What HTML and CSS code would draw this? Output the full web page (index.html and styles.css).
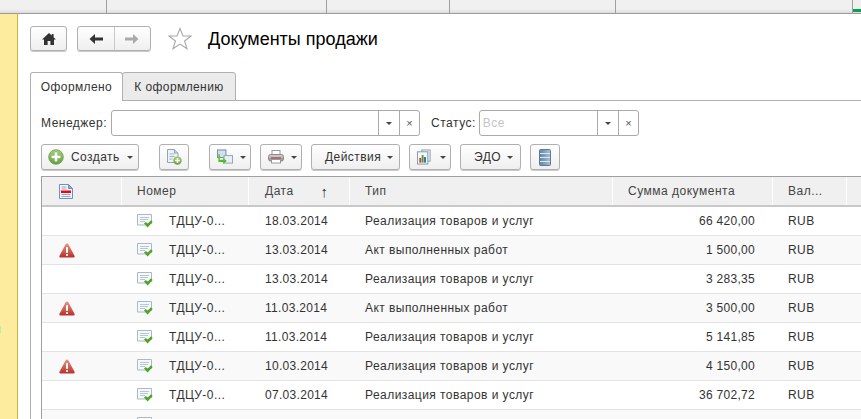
FILE: index.html
```html
<!DOCTYPE html>
<html lang="ru">
<head>
<meta charset="utf-8">
<title>Документы продажи</title>
<link rel="stylesheet" href="styles.css">
</head>
<body>
<svg class="defs" aria-hidden="true">
  <defs>
    <linearGradient id="gGreen" x1="0" y1="0" x2="0" y2="1"><stop offset="0" stop-color="#a6cf7e"/><stop offset="1" stop-color="#5f9e3c"/></linearGradient>
    <linearGradient id="gRed" x1="0" y1="0" x2="0" y2="1"><stop offset="0" stop-color="#ea9384"/><stop offset="1" stop-color="#b5322a"/></linearGradient>
    <linearGradient id="gSteel" x1="0" y1="0" x2="1" y2="0"><stop offset="0" stop-color="#5f85a8"/><stop offset="1" stop-color="#a9c0d4"/></linearGradient>
    <linearGradient id="gGrey" x1="0" y1="0" x2="0" y2="1"><stop offset="0" stop-color="#d8d8d8"/><stop offset="1" stop-color="#8c8c8c"/></linearGradient>
    <symbol id="i-home" viewBox="0 0 16 14"><path d="M8 1 1 7.500h2V13h3.600V9h2.800v4H13V7.500h2L12.600 5.200V2h-1.800v1.500z" fill="#333"/></symbol>
    <symbol id="i-left" viewBox="0 0 16 12"><path d="M7 1 1.500 6 7 11V7.600h8V4.400H7z" fill="#333"/></symbol>
    <symbol id="i-right" viewBox="0 0 16 12"><path d="M9 1 14.500 6 9 11V7.600H1V4.400h8z" fill="#aaa"/></symbol>
    <symbol id="i-star" viewBox="0 0 24 23"><path d="M12 1.500 15 9h8l-6.400 5 2.400 7.800-7-4.700-7 4.700L7.400 14 1 9h8z" fill="#fff" stroke="#a8a8a8" stroke-width="1.100"/></symbol>
    <symbol id="i-plus" viewBox="0 0 16 16"><circle cx="8" cy="8" r="7.300" fill="url(#gGreen)" stroke="#6d9a52" stroke-width=".8"/><path d="M6.700 3.500h2.600v3.200h3.200v2.600H9.300v3.200H6.700V9.300H3.500V6.700h3.200z" fill="#fff"/></symbol>
    <symbol id="i-docadd" viewBox="0 0 16 16"><path d="M1.500.5h7l3.500 3.500v9.500H1.500z" fill="#eef2f6" stroke="#8ea4b8"/><path d="M8.500.5V4H12" fill="#c9d6e2" stroke="#8ea4b8"/><path d="M3.500 5h5M3.500 7.500h5M3.500 10h3" stroke="#9fb0c0"/><circle cx="11.500" cy="11.500" r="4.200" fill="url(#gGreen)"/><path d="M10.700 9h1.600v1.700H14v1.600h-1.700V14h-1.600v-1.700H9v-1.600h1.700z" fill="#fff"/></symbol>
    <symbol id="i-move" viewBox="0 0 17 16"><rect x=".5" y=".5" width="9" height="8" fill="#d3dfea" stroke="#6f8ba6"/><rect x="7.500" y="6.500" width="9" height="8" fill="#e9eff5" stroke="#8ea4b8"/><path d="M3 5v6h3.500V9l4 3.200-4 3.200v-2.100H1.500V5z" fill="#4fbf28"/></symbol>
    <symbol id="i-print" viewBox="0 0 16 14"><rect x="4" y=".5" width="8" height="5" fill="#fff" stroke="#9a9a9a"/><rect x=".5" y="4.500" width="15" height="6.500" rx="2" fill="url(#gGrey)" stroke="#8a8a8a"/><rect x="3" y="7.500" width="10" height="1" fill="#a33"/><rect x="3.500" y="9.500" width="9" height="3.500" fill="#fff" stroke="#9a9a9a"/></symbol>
    <symbol id="i-report" viewBox="0 0 17 16"><rect x="5" y=".5" width="9" height="12" fill="#e4ebf2" stroke="#8ea4b8"/><rect x=".5" y="2.500" width="11" height="13" fill="#f6f8fa" stroke="#7f98ae"/><rect x="2.500" y="9" width="2" height="5" fill="#d8352a"/><rect x="5" y="6" width="2" height="8" fill="#4f9e28"/><rect x="7.500" y="8" width="2" height="6" fill="#2d6fb5"/></symbol>
    <symbol id="i-list" viewBox="0 0 12 17"><rect x=".5" y=".5" width="11" height="16" rx="1" fill="url(#gSteel)" stroke="#5b7c99"/><path d="M1 4.500h10M1 8.500h10M1 12.500h10" stroke="#dfe8f0" stroke-width="1.200"/></symbol>
    <symbol id="i-docred" viewBox="0 0 15 15"><path d="M.5.500h9l4 4v10H.5z" fill="#f4f6fb" stroke="#6f8fc4"/><path d="M9.500.5v4h4z" fill="#8fa9d4" stroke="#6f8fc4"/><path d="M2.500 3h5M2.500 5h5M2.500 10.500h9M2.500 12.500h9" stroke="#8fa9d4"/><rect x="2" y="6.500" width="10" height="2.500" fill="#f00"/></symbol>
    <symbol id="i-doccheck" viewBox="0 0 16 14"><path d="M.5.500h14v9h-4l-1 1.500H.5z" fill="#f6f8fa" stroke="#a9b9c6"/><path d="M3 3.500h9M3 5.500h8M3 7.500h5" stroke="#b9c6d1"/><path d="M7 9.500 8.900 8l1.700 1.800L14 6.200 15.700 8l-5.100 5.500z" fill="#4fa326"/></symbol>
    <symbol id="i-warn" viewBox="0 0 16 15"><path d="M8 .5c.7 0 1.100.4 1.500 1.100l6 11.200c.5 1 0 1.700-1 1.700h-13c-1 0-1.500-.7-1-1.700l6-11.200C6.900.9 7.300.5 8 .5z" fill="url(#gRed)"/><rect x="7" y="4" width="2" height="6" rx=".8" fill="#fff"/><rect x="7" y="11" width="2" height="2" rx=".8" fill="#fff"/></symbol>
  </defs>
</svg>

<header class="topbar">
  <div class="topcell topcell-a"></div>
  <div class="topcell topcell-b"></div>
  <div class="topcell topcell-c"></div>
  <div class="topcell topcell-d"></div>
  <div class="topcell topcell-e"></div>
  <div class="topcell topcell-f"><span class="topmark"></span></div>
</header>

<div class="shell">
  <aside class="sidebar"></aside>
  <main class="content">
    <div class="navrow">
      <div class="btn navbtn home"><svg class="ic-home"><use href="#i-home"/></svg></div>
      <div class="btn navbtn history">
        <span class="histpart"><svg class="ic-arrow"><use href="#i-left"/></svg></span>
        <span class="histpart histsep"><svg class="ic-arrow"><use href="#i-right"/></svg></span>
      </div>
      <svg class="ic-star"><use href="#i-star"/></svg>
      <h1 class="title">Документы продажи</h1>
    </div>

    <div class="tabs">
      <div class="tab tab-active">Оформлено</div>
      <div class="tab tab-idle">К оформлению</div>
      <div class="tabline"></div>
    </div>

    <div class="panel">
      <div class="filters">
        <label class="flabel">Менеджер:</label>
        <div class="field field-manager">
          <span class="fvalue"></span>
          <span class="fbtn"><i class="caret"></i></span>
          <span class="fbtn fx">×</span>
        </div>
        <label class="flabel flabel-status">Статус:</label>
        <div class="field field-status">
          <span class="fvalue fplaceholder">Все</span>
          <span class="fbtn"><i class="caret"></i></span>
          <span class="fbtn fx">×</span>
        </div>
      </div>

      <div class="toolbar">
        <div class="btn tb tb-create"><svg class="ic16"><use href="#i-plus"/></svg><span class="tbtext">Создать</span><i class="caret"></i></div>
        <div class="btn tb tb-icon tb-docadd"><svg class="ic16"><use href="#i-docadd"/></svg></div>
        <div class="btn tb tb-drop"><svg class="ic16"><use href="#i-move"/></svg><i class="caret"></i></div>
        <div class="btn tb tb-drop"><svg class="ic16"><use href="#i-print"/></svg><i class="caret"></i></div>
        <div class="btn tb tb-actions"><span class="tbtext">Действия</span><i class="caret"></i></div>
        <div class="btn tb tb-drop"><svg class="ic16"><use href="#i-report"/></svg><i class="caret"></i></div>
        <div class="btn tb tb-edo"><span class="tbtext">ЭДО</span><i class="caret"></i></div>
        <div class="btn tb tb-icon"><svg class="ic-list"><use href="#i-list"/></svg></div>
      </div>

      <div class="table">
        <div class="thead">
          <div class="th th-flag"><svg class="ic-flag"><use href="#i-docred"/></svg></div>
          <div class="th">Номер</div>
          <div class="th th-date">Дата<span class="sort">↑</span></div>
          <div class="th">Тип</div>
          <div class="th">Сумма документа</div>
          <div class="th">Вал...</div>
          <div class="th"></div>
        </div>

        <div class="tr">
          <div class="td td-flag"></div>
          <div class="td"><svg class="ic-doc"><use href="#i-doccheck"/></svg>ТДЦУ-0...</div>
          <div class="td td-date">18.03.2014</div>
          <div class="td">Реализация товаров и услуг</div>
          <div class="td td-sum">66 420,00</div>
          <div class="td">RUB</div>
          <div class="td"></div>
        </div>
        <div class="tr tr-alt">
          <div class="td td-flag"><svg class="ic-warn"><use href="#i-warn"/></svg></div>
          <div class="td"><svg class="ic-doc"><use href="#i-doccheck"/></svg>ТДЦУ-0...</div>
          <div class="td td-date">13.03.2014</div>
          <div class="td">Акт выполненных работ</div>
          <div class="td td-sum">1 500,00</div>
          <div class="td">RUB</div>
          <div class="td"></div>
        </div>
        <div class="tr">
          <div class="td td-flag"></div>
          <div class="td"><svg class="ic-doc"><use href="#i-doccheck"/></svg>ТДЦУ-0...</div>
          <div class="td td-date">13.03.2014</div>
          <div class="td">Реализация товаров и услуг</div>
          <div class="td td-sum">3 283,35</div>
          <div class="td">RUB</div>
          <div class="td"></div>
        </div>
        <div class="tr tr-alt">
          <div class="td td-flag"><svg class="ic-warn"><use href="#i-warn"/></svg></div>
          <div class="td"><svg class="ic-doc"><use href="#i-doccheck"/></svg>ТДЦУ-0...</div>
          <div class="td td-date">11.03.2014</div>
          <div class="td">Акт выполненных работ</div>
          <div class="td td-sum">3 500,00</div>
          <div class="td">RUB</div>
          <div class="td"></div>
        </div>
        <div class="tr">
          <div class="td td-flag"></div>
          <div class="td"><svg class="ic-doc"><use href="#i-doccheck"/></svg>ТДЦУ-0...</div>
          <div class="td td-date">11.03.2014</div>
          <div class="td">Реализация товаров и услуг</div>
          <div class="td td-sum">5 141,85</div>
          <div class="td">RUB</div>
          <div class="td"></div>
        </div>
        <div class="tr tr-alt">
          <div class="td td-flag"><svg class="ic-warn"><use href="#i-warn"/></svg></div>
          <div class="td"><svg class="ic-doc"><use href="#i-doccheck"/></svg>ТДЦУ-0...</div>
          <div class="td td-date">10.03.2014</div>
          <div class="td">Реализация товаров и услуг</div>
          <div class="td td-sum">4 150,00</div>
          <div class="td">RUB</div>
          <div class="td"></div>
        </div>
        <div class="tr">
          <div class="td td-flag"></div>
          <div class="td"><svg class="ic-doc"><use href="#i-doccheck"/></svg>ТДЦУ-0...</div>
          <div class="td td-date">07.03.2014</div>
          <div class="td">Реализация товаров и услуг</div>
          <div class="td td-sum">36 702,72</div>
          <div class="td">RUB</div>
          <div class="td"></div>
        </div>
        <div class="tr tr-alt">
          <div class="td td-flag"></div>
          <div class="td"><svg class="ic-doc"><use href="#i-doccheck"/></svg></div>
          <div class="td"></div>
          <div class="td"></div>
          <div class="td"></div>
          <div class="td"></div>
          <div class="td"></div>
        </div>
      </div>
    </div>
  </main>
</div>
</body>
</html>
```
FILE: styles.css
```css
* { box-sizing: border-box; }
html, body { margin: 0; padding: 0; height: 419px; overflow: hidden; background: #fff; }
body {
  font-family: "Liberation Sans", Arial, sans-serif;
  font-size: 12px;
  color: #333;
  display: flex;
  flex-direction: column;
}
.defs { width: 0; height: 0; display: block; overflow: hidden; }

/* top strip */
.topbar {
  flex: none;
  height: 14px;
  display: flex;
  background: linear-gradient(#f0f0f0 0, #f0f0f0 9px, #dcdcdc 13px);
  border-bottom: 1px solid #9c9c9c;
}
.topcell { border-right: 1px solid #a0a0a0; height: 13px; flex: none; }
.topcell-a { width: 107px; }
.topcell-b { width: 220px; }
.topcell-c { width: 123px; }
.topcell-d { width: 166px; }
.topcell-e { width: 237px; }
.topcell-f { flex: 1; border-right: 0; display: flex; align-items: flex-end; padding-bottom: 1px; }
.topmark { display: block; width: 100%; height: 3px; background: #0f9d58; }

.shell { flex: 1; display: flex; min-height: 0; }
.sidebar { position: relative; flex: none; width: 18px; background: #fdeb9e; border-right: 1px solid #c8b43c; }
.sidebar::before {
  content: "";
  position: absolute;
  left: 0;
  top: 312px;
  width: 1px;
  height: 7px;
  background: #b7eea6;
}
.content { flex: 1; min-width: 0; padding: 12px 0 0 12px; }

/* buttons */
.btn {
  display: flex;
  align-items: center;
  background: linear-gradient(#fff, #efefef);
  border: 1px solid #b0b0b0;
  border-radius: 3px;
  box-shadow: 0 1px 0 #c9c9c9;
}

.navrow { display: flex; align-items: center; height: 25px; }
.navbtn { height: 25px; }
.home { width: 37px; justify-content: center; }
.history { width: 74px; margin-left: 10px; }
.histpart { flex: 1; height: 100%; display: flex; align-items: center; justify-content: center; }
.histsep { border-left: 1px solid #c8c8c8; }
.ic-home { width: 16px; height: 14px; }
.ic-arrow { width: 16px; height: 12px; }
.ic-star { width: 24px; height: 23px; margin-left: 17px; }
.title { margin: 2px 0 0 16px; font-size: 18px; font-weight: 400; color: #000; white-space: nowrap; }

/* tabs */
.tabs { display: flex; height: 29px; margin-top: 21px; }
.tab {
  height: 29px;
  padding-top: 7px;
  text-align: center;
  letter-spacing: .4px;
  border: 1px solid #b0b0b0;
  border-radius: 3px 3px 0 0;
}
.tab-active { width: 93px; background: #fff; border-bottom: 0; }
.tab-idle { width: 114px; margin-left: -1px; background: #ebebeb; }
.tabline { flex: 1; border-bottom: 1px solid #b0b0b0; }

.panel { border-left: 1px solid #b0b0b0; padding: 9px 0 0 10px; }

/* filters */
.filters { display: flex; align-items: center; height: 26px; }
.flabel { letter-spacing: .5px; white-space: nowrap; }
.flabel-status { margin-left: 11px; }
.field {
  display: flex;
  height: 26px;
  background: #fff;
  border: 1px solid #aaa;
  border-radius: 3px;
}
.field-manager { width: 309px; margin-left: 4px; }
.field-status { width: 160px; margin-left: 3px; }
.fvalue { flex: 1; padding: 5px 3px; letter-spacing: .4px; }
.fplaceholder { color: #c4c4c4; }
.fbtn {
  flex: none;
  width: 21px;
  display: flex;
  align-items: center;
  justify-content: center;
  border-left: 1px solid #aaa;
}
.fx { width: 20px; font-size: 11px; color: #555; }
.caret {
  display: inline-block;
  width: 0;
  height: 0;
  border-left: 3px solid transparent;
  border-right: 3px solid transparent;
  border-top: 3px solid #444;
}

/* toolbar */
.toolbar { display: flex; height: 26px; margin-top: 8px; gap: 9px; }
.tb { height: 26px; }
.ic16 { width: 16px; height: 16px; flex: none; }
.ic-list { width: 12px; height: 17px; }
.tbtext { letter-spacing: .45px; white-space: nowrap; }
.tb-create { width: 98px; padding-left: 6px; }
.tb-create .tbtext { margin-left: 7px; }
.tb-create .caret { margin-left: 7px; }
.tb-icon { width: 30px; justify-content: center; }
.tb-docadd { margin-left: 11px; margin-right: 11px; }
.tb-drop { width: 42px; padding-left: 7px; }
.tb-drop .caret { margin-left: 7px; }
.tb-actions { width: 89px; padding-left: 13px; }
.tb-actions .caret { margin-left: 6px; }
.tb-edo { width: 61px; padding-left: 13px; }
.tb-edo .caret { margin-left: 6px; }

/* table */
.table { margin-top: 6px; border-left: 1px solid #a0a0a0; border-top: 1px solid #a0a0a0; }
.thead, .tr {
  display: grid;
  grid-template-columns: 79px 127px 101px 263px 160px 74px 1fr;
}
.thead { height: 30px; background: #f0f0f0; border-bottom: 2px solid #c8c8c8; }
.th {
  display: flex;
  align-items: center;
  padding-left: 15px;
  letter-spacing: .5px;
  color: #444;
  border-left: 1px solid #fff;
  white-space: nowrap;
}
.th:first-child { border-left: 0; }
.th-date { padding-left: 16px; }
.th-flag { padding-left: 17px; }
.sort { margin-left: 27px; font-size: 15px; color: #333; }
.ic-flag { width: 15px; height: 15px; }

.tr { height: 29px; background: #fff; border-bottom: 1px solid #e3e3e3; }
.tr-alt { background: #f9f9f9; }
.td {
  display: flex;
  align-items: center;
  padding-left: 16px;
  letter-spacing: .45px;
  white-space: nowrap;
  min-width: 0;
}
.td:first-child { padding-left: 17px; }
.td-date { padding-left: 17px; letter-spacing: .3px; }
.td-sum { justify-content: flex-end; padding: 0 17px 0 0; letter-spacing: .3px; }
.ic-doc { width: 16px; height: 14px; margin-right: 16px; flex: none; }
.ic-warn { width: 16px; height: 15px; }
```
